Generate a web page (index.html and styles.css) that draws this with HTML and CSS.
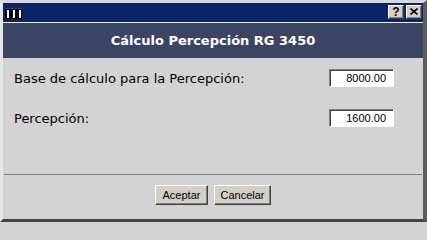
FILE: index.html
```html
<!DOCTYPE html>
<html lang="es">
<head>
<meta charset="utf-8">
<title>Cálculo Percepción RG 3450</title>
<link rel="stylesheet" href="styles.css">
</head>
<body>
<div class="window">
  <div class="titlebar">
    <svg class="app-icon" width="17" height="11" viewBox="0 0 17 11">
      <rect x="0" y="0" width="17" height="11" fill="#000"/>
      <rect x="0" y="0" width="17" height="1" fill="#1c3aa0"/>
      <rect x="2" y="2" width="2" height="8" fill="#fff"/>
      <rect x="8" y="2" width="2" height="8" fill="#fff"/>
      <rect x="14" y="2" width="2" height="8" fill="#fff"/>
    </svg>
    <div class="tb-buttons">
      <div class="tb-btn">?</div>
      <div class="tb-btn tb-close">
        <svg width="8" height="7" viewBox="0 0 8 7"><path d="M0.5 0.5 L7.5 6.5 M7.5 0.5 L0.5 6.5" stroke="#000" stroke-width="1.6"/></svg>
      </div>
    </div>
  </div>
  <div class="header">Cálculo Percepción RG 3450</div>
  <div class="content">
    <div class="row">
      <span class="label">Base de cálculo para la Percepción:</span>
      <div class="field">8000.00</div>
    </div>
    <div class="row">
      <span class="label">Percepción:</span>
      <div class="field">1600.00</div>
    </div>
  </div>
  <div class="separator"></div>
  <div class="actions">
    <button class="btn btn-ok">Aceptar</button>
    <button class="btn btn-cancel">Cancelar</button>
  </div>
</div>
</body>
</html>
```
FILE: styles.css
```css
html, body {
  margin: 0;
  padding: 0;
  background: #d3d3d3;
}
.window {
  box-sizing: border-box;
  width: 427px;
  height: 222px;
  background: #d3d3d3;
  border-left: 3px solid #e6e6e6;
  border-top: 3px solid #d8d8d8;
  border-right: 4px solid #5c5c5c;
  border-bottom: 3px solid #454545;
  display: flex;
  flex-direction: column;
  font-family: "DejaVu Sans", Verdana, sans-serif;
}
.titlebar {
  height: 19px;
  background: #0a246a;
  display: flex;
  align-items: center;
  justify-content: space-between;
  padding: 0 1px 0 2px;
  border-bottom: 1px solid #f0f0f0;
}
.app-icon {
  display: block;
  margin-top: 2px;
}
.tb-buttons {
  display: flex;
  gap: 2px;
  align-items: center;
  margin-top: -2px;
}
.tb-btn {
  box-sizing: border-box;
  width: 16px;
  height: 14px;
  background: #d4d0c8;
  border-top: 1px solid #fff;
  border-left: 1px solid #fff;
  border-right: 1px solid #404040;
  border-bottom: 1px solid #404040;
  box-shadow: inset -1px -1px 0 #808080;
  display: flex;
  align-items: center;
  justify-content: center;
  font-family: "Liberation Sans", Arial, sans-serif;
  font-weight: bold;
  font-size: 12px;
  line-height: 1;
  color: #000;
}
.tb-close svg {
  display: block;
}
.header {
  height: 35px;
  background: #3b4563;
  color: #fff;
  font-weight: bold;
  font-size: 13px;
  display: flex;
  align-items: center;
  justify-content: center;
}
.content {
  padding: 11px 29px 0 11px;
  display: flex;
  flex-direction: column;
  gap: 22px;
  height: 105px;
}
.row {
  display: flex;
  align-items: center;
  justify-content: space-between;
  height: 18px;
}
.label {
  font-size: 13px;
  color: #000;
}
.field {
  box-sizing: border-box;
  width: 65px;
  height: 18px;
  background: #fff;
  border-top: 1px solid #808080;
  border-left: 1px solid #808080;
  border-right: 1px solid #fff;
  border-bottom: 1px solid #fff;
  box-shadow: inset 1px 1px 0 #404040;
  font-family: "Liberation Sans", Arial, sans-serif;
  font-size: 11px;
  line-height: 16px;
  text-align: right;
  padding-right: 7px;
  color: #000;
}
.separator {
  height: 1px;
  background: #7c7c7c;
  margin: 0 1px;
}
.actions {
  display: flex;
  justify-content: center;
  gap: 6px;
  padding-top: 10px;
}
.btn {
  box-sizing: border-box;
  height: 20px;
  background: #d4d0c8;
  border-top: 1px solid #fff;
  border-left: 1px solid #fff;
  border-right: 1px solid #404040;
  border-bottom: 1px solid #404040;
  box-shadow: inset -1px -1px 0 #808080;
  font-family: "Liberation Sans", Arial, sans-serif;
  font-size: 11px;
  color: #000;
  padding: 0;
  margin: 0;
}
.btn-ok {
  width: 53px;
}
.btn-cancel {
  width: 57px;
}
```
